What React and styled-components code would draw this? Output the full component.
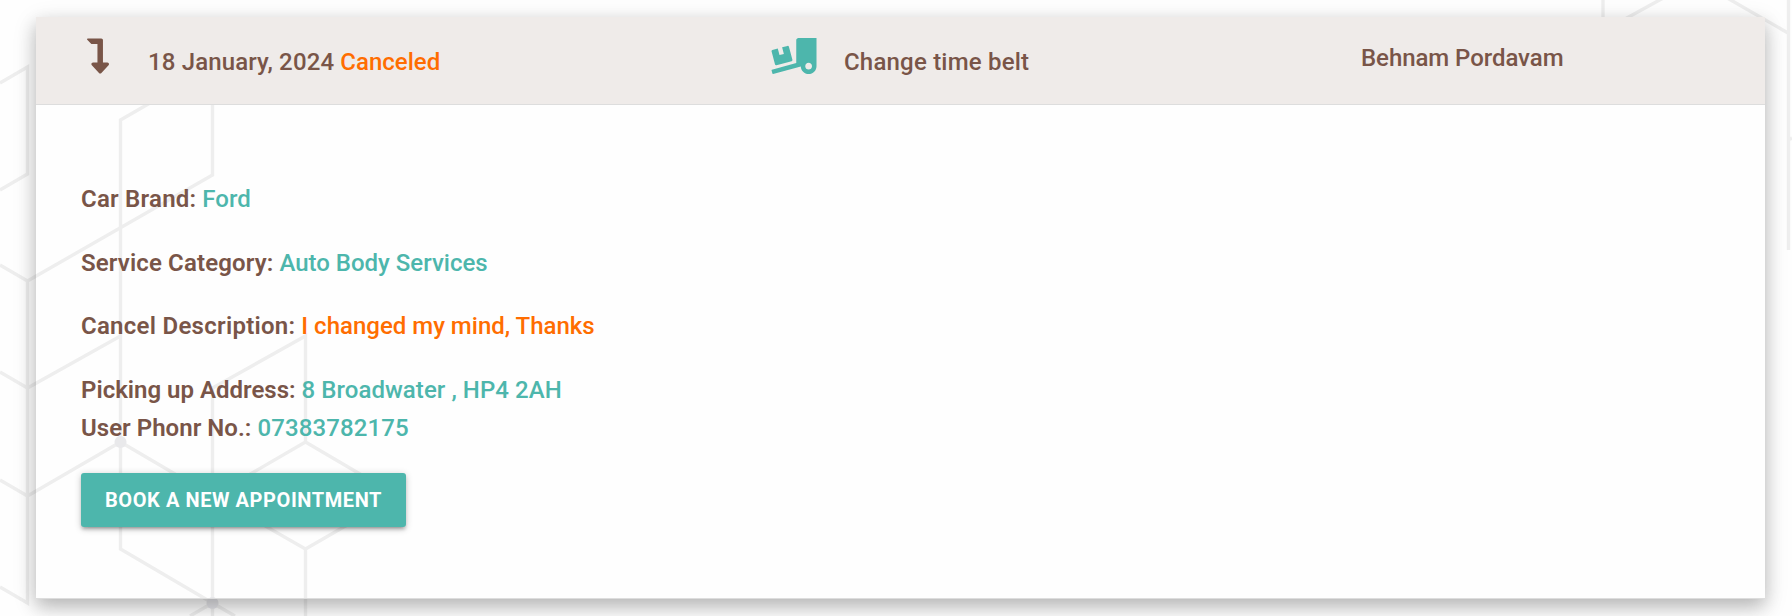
import React from "react";
import styled, { createGlobalStyle } from "styled-components";
import { FaLevelDownAlt, FaTruckLoading } from "react-icons/fa";

const brown = "#795548";
const teal = "#4db6ac";
const orange = "#ff6d00";

const GlobalStyle = createGlobalStyle`
  *, *::before, *::after { box-sizing: border-box; }
  body {
    margin: 0;
    background: #fefefe;
    color: ${brown};
    font-family: Roboto, "Liberation Sans", sans-serif;
    font-size: 24px;
    font-weight: 500;
    overflow: hidden;
  }
`;

const Page = styled.main`
  position: relative;
  height: 616px;
  padding: 17px 27px 0 36px;
  overflow: hidden;
`;

const Pattern = styled.svg`
  position: absolute;
  inset: 0;
  fill: none;
  stroke: #eeeeee;
  stroke-width: 3.4;
`;

const Card = styled.section`
  position: relative;
  height: 582px;
  border-bottom: 1px solid #ddd;
  box-shadow: 0 7.5px 16.5px rgba(0, 0, 0, 0.18), 0 6px 22.5px rgba(0, 0, 0, 0.15);
`;

const Header = styled.header`
  display: grid;
  grid-template-columns: 684px 590px 1fr;
  height: 88px;
  padding: 21px 0 0 51px;
  background: #efebe9;
  border-bottom: 1px solid #ddd;
`;

const HeaderCell = styled.div`
  display: flex;
  align-items: flex-start;
  line-height: 38px;
  white-space: pre;
  svg {
    flex: none;
    height: 36px;
    width: ${(p) => p.$iconWidth}px;
    margin-right: ${(p) => p.$gap}px;
    color: ${(p) => p.$iconColor};
  }
`;

const HeaderText = styled.div`
  padding-top: ${(p) => p.$drop || 0}px;
`;

const Text = styled.span`
  color: ${(p) => p.$color || "inherit"};
  font-weight: ${(p) => p.$weight || 500};
  letter-spacing: ${(p) => p.$track || 0}px;
`;

const Body = styled.div`
  padding: 75px 45px 0;
`;

const Row = styled.p`
  display: flex;
  gap: 6px;
  margin: 0 0 ${(p) => (p.$tight ? 0 : 25.6)}px;
  line-height: 38px;
  white-space: pre;
`;

const Button = styled.button`
  display: flex;
  align-items: center;
  justify-content: center;
  width: 325px;
  height: 54px;
  margin-top: 26px;
  padding: 0;
  border: 0;
  border-radius: 3px;
  background: ${teal};
  color: #fff;
  font: 700 20px Roboto, "Liberation Sans", sans-serif;
  letter-spacing: 0.58px;
  white-space: nowrap;
  box-shadow: 0 3px 3px rgba(0, 0, 0, 0.14), 0 4.5px 1.5px -3px rgba(0, 0, 0, 0.12),
    0 1.5px 7.5px rgba(0, 0, 0, 0.2);
`;

const rows = [
  { label: "Car Brand:", labelTrack: 0.23, value: "Ford" },
  { label: "Service Category:", labelTrack: 0.13, value: "Auto Body Services" },
  { label: "Cancel Description:", labelTrack: 0.27, value: "I changed my mind, Thanks", color: orange },
  { label: "Picking up Address:", value: "8 Broadwater , HP4 2AH", valueTrack: 0.06, tight: true },
  { label: "User Phonr No.:", labelTrack: 0.03, value: "07383782175", valueTrack: 0.12, tight: true },
];

function HexPattern() {
  return (
    <Pattern width="1792" height="616" viewBox="0 0 1792 616" aria-hidden="true">
      <path d="M0 83L27.5 67V174L0 190M0 265L27.5 281V603L0 587M0 372L27.5 388L120.5 336M0 480L27.5 496L120.5 442L212.5 496M27.5 281L212.5 175V70" />
      <path d="M212.5 67L120.5 120V549L212.5 603M212.5 616V388L305.5 336V442L212.5 496L305.5 549L397.5 496L305.5 442M305.5 549V616M190 616L212.5 603L235 616" />
      <path d="M1603 0V30M1625 19L1696 -20L1788 33M1788.5 0V250M1788 140L1792 138" />
      <circle cx="120.5" cy="442" r="6" fill="#e9e9eb" stroke="none" />
      <circle cx="212.5" cy="603" r="6" fill="#e6e6ea" stroke="none" />
    </Pattern>
  );
}

export default function App() {
  return (
    <Page>
      <GlobalStyle />
      <HexPattern />
      <Card>
        <Header>
          <HeaderCell $iconWidth={22} $gap={39} $iconColor={brown}>
            <FaLevelDownAlt />
            <HeaderText $drop={5}>
              <Text $track={0.14}>18 January, 2024 </Text>
              <Text $color={orange}>Canceled</Text>
            </HeaderText>
          </HeaderCell>
          <HeaderCell $iconWidth={46} $gap={27} $iconColor={teal}>
            <FaTruckLoading />
            <HeaderText $drop={5}>
              <Text $track={0.2}>Change time belt</Text>
            </HeaderText>
          </HeaderCell>
          <HeaderCell>
            <HeaderText $drop={1}>
              <Text $track={-0.06}>Behnam Pordavam</Text>
            </HeaderText>
          </HeaderCell>
        </Header>
        <Body>
          {rows.map((row) => (
            <Row key={row.label} $tight={row.tight}>
              <Text $weight={600} $track={row.labelTrack}>{row.label}</Text>
              <Text $color={row.color || teal} $track={row.valueTrack}>{row.value}</Text>
            </Row>
          ))}
          <Button>BOOK A NEW APPOINTMENT</Button>
        </Body>
      </Card>
    </Page>
  );
}
